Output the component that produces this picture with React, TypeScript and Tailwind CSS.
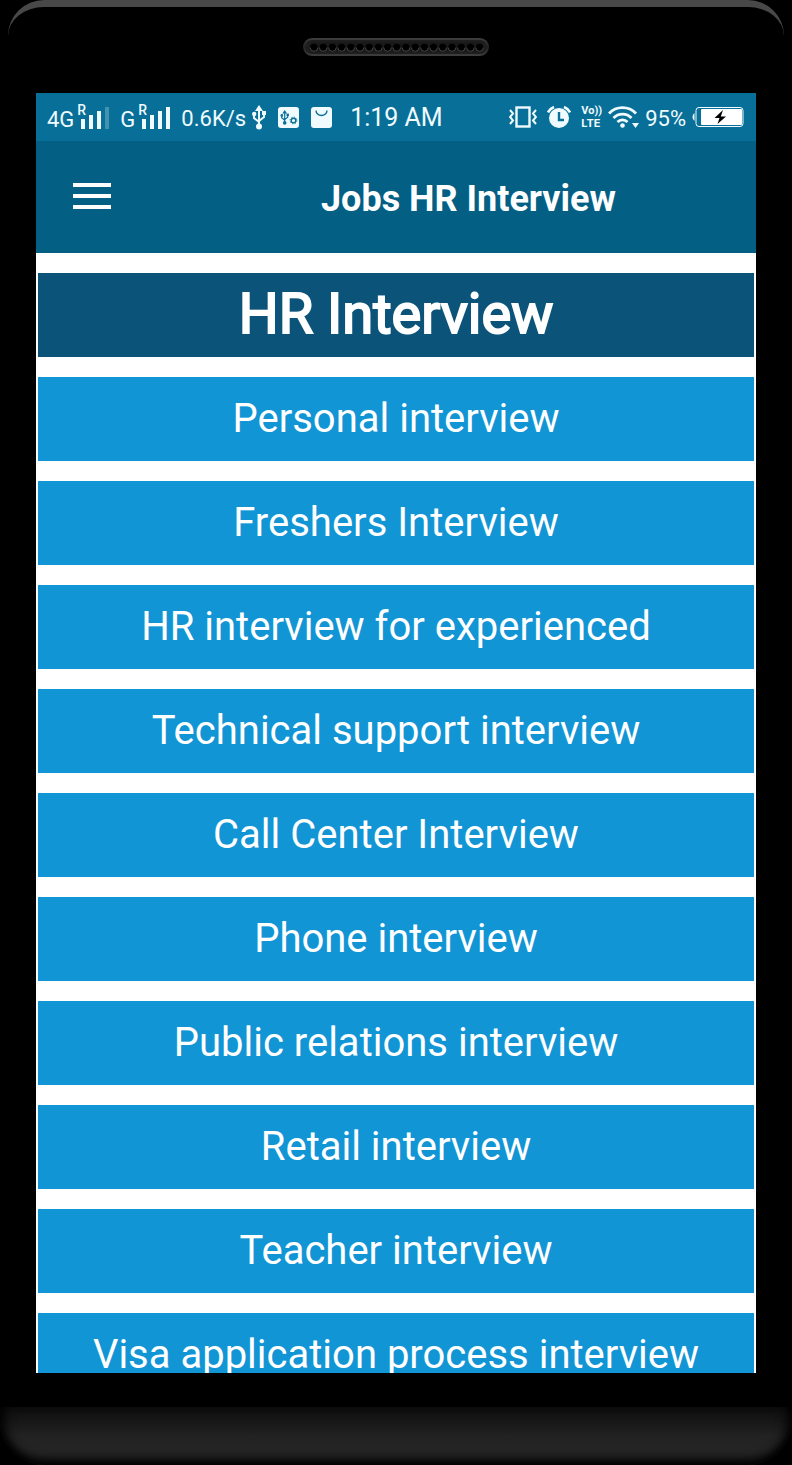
import type { ReactNode } from 'react'

const interviews = [
  'Personal interview',
  'Freshers Interview',
  'HR interview for experienced',
  'Technical support interview',
  'Call Center Interview',
  'Phone interview',
  'Public relations interview',
  'Retail interview',
  'Teacher interview',
  'Visa application process interview',
]

const speakerHoles = Array.from({ length: 19 }, (_, i) => 11 + i * 9.2)

function Speaker() {
  return (
    <svg width="186" height="18" viewBox="0 0 186 18" aria-hidden="true">
      <defs>
        <linearGradient id="speaker-rim" x1="0" y1="0" x2="0" y2="1">
          <stop offset="0" stopColor="#3c3c3c" />
          <stop offset="0.5" stopColor="#222" />
          <stop offset="1" stopColor="#3c3c3c" />
        </linearGradient>
      </defs>
      <rect x="1" y="1" width="184" height="16" rx="8" fill="#1e1e1e" stroke="url(#speaker-rim)" strokeWidth="2" />
      <rect x="6" y="4" width="174" height="10" rx="5" fill="#191919" />
      {speakerHoles.map((x) => (
        <g key={x}>
          <circle cx={x} cy="9.5" r="3.8" fill="#000" />
          <path d={`M${x - 3.8} 9.5a3.8 3.8 0 0 0 7.6 0`} fill="none" stroke="#444" />
        </g>
      ))}
    </svg>
  )
}

function Signal({ label, level }: { label: string; level: number }) {
  return (
    <span className="flex items-center gap-[3px]">
      <span className="pt-[6px] text-[22px] leading-6">{label}</span>
      <span className="relative">
        <svg width="33" height="26" viewBox="0 0 33 26" fill="currentColor" aria-hidden="true">
          <rect x="4" y="15" width="4" height="10" />
          <rect x="12" y="11" width="4" height="14" />
          <rect x="20" y="7" width="4" height="18" />
          <rect x="28" y="3" width="4" height="22" opacity={level > 3 ? 1 : 0.25} />
        </svg>
        <span className="absolute -top-1 left-0 text-sm font-medium">R</span>
      </span>
    </span>
  )
}

function UsbShape() {
  return (
    <>
      <path d="M7 3v17M2 9v4l5 4M12 8v4l-5 4" fill="none" stroke="currentColor" strokeWidth="2" />
      <path d="M7 0l4 6H3z" fill="currentColor" />
      <circle cx="7" cy="21.5" r="3" fill="currentColor" />
      <circle cx="2.2" cy="9" r="2.2" fill="currentColor" />
      <rect x="10" y="6" width="4" height="4" fill="currentColor" />
    </>
  )
}

function Icon({ width, height, children }: { width: number; height: number; children: ReactNode }) {
  return (
    <svg width={width} height={height} viewBox={`0 0 ${width} ${height}`} className="shrink-0" aria-hidden="true">
      {children}
    </svg>
  )
}

function StatusBar() {
  return (
    <div className="flex h-12 shrink-0 items-center justify-between bg-[#086f98] pl-[11px] pr-3 text-[#f0fbff]">
      <div className="flex items-center gap-3">
        <div className="flex items-center gap-[10px]">
          <Signal label="4G" level={3} />
          <Signal label="G" level={4} />
          <div className="flex items-center gap-[6px]">
            <span className="pt-1 text-[22px] leading-6">0.6K/s</span>
            <Icon width={14} height={25}>
              <UsbShape />
            </Icon>
          </div>
        </div>
        <Icon width={21} height={21}>
          <rect width="21" height="21" rx="3" fill="currentColor" />
          <g transform="translate(2.500 3) scale(.6)" className="text-[#086f98]">
            <UsbShape />
          </g>
          <circle cx="15.5" cy="13.5" r="2.3" fill="none" stroke="#086f98" strokeWidth="1.4" />
          <circle cx="15.5" cy="13.5" r="3.4" fill="none" stroke="#086f98" strokeWidth="1" strokeDasharray="1.3 1.37" />
        </Icon>
        <Icon width={21} height={21}>
          <path d="M3 0h15a3 3 0 0 1 3 3v15a3 3 0 0 1-3 3H3a3 3 0 0 1-3-3V3a3 3 0 0 1 3-3z" fill="currentColor" />
          <path d="M5 3.500a5.500 5 0 0 0 11 0" fill="none" stroke="#086f98" strokeWidth="1.4" />
        </Icon>
        <span className="pl-[6px] pt-[2px] text-[25px]">1:19 AM</span>
      </div>

      <div className="flex items-center gap-[6px]">
        <div className="flex items-center gap-[10px]">
          <Icon width={28} height={22}>
            <rect x="7.5" y="1.500" width="13" height="19" fill="none" stroke="currentColor" strokeWidth="2.4" />
            <path
              d="M1 4l3 3.500L1 11l3 3.500L1 18M27 4l-3 3.500 3 3.500-3 3.500 3 3.500"
              fill="none"
              stroke="currentColor"
              strokeWidth="2"
            />
          </Icon>
          <Icon width={24} height={24}>
            <circle cx="12" cy="13" r="10" fill="currentColor" />
            <path d="M1 7.500A11 11 0 0 1 7 2M23 7.500A11 11 0 0 0 17 2" fill="none" stroke="currentColor" strokeWidth="2.6" />
            <path d="M12 7v8h5" fill="none" stroke="#086f98" strokeWidth="2.4" />
          </Icon>
          <span className="flex flex-col text-[11px] font-bold leading-[13px]">
            <span>Vo))</span>
            <span className="font-['Inter',sans-serif]">LTE</span>
          </span>
        </div>
        <Icon width={31} height={24}>
          <g fill="none" stroke="currentColor" strokeWidth="2.8">
            <path d="M1 8.500a18.500 18.500 0 0 1 27 0" />
            <path d="M5.500 13a12.500 12.500 0 0 1 18 0" />
            <path d="M9.500 17a7 7 0 0 1 10 0" />
          </g>
          <circle cx="14.5" cy="20.5" r="2.3" fill="currentColor" />
          <path d="M24 18h7l-3.500 5z" fill="currentColor" />
        </Icon>
        <span className="pt-[2px] text-[22px]">95%</span>
        <Icon width={52} height={22}>
          <path d="M2.500 7A5 5 0 0 0 2.500 15z" fill="currentColor" />
          <rect x="4" y="1.500" width="47" height="19" rx="3" fill="none" stroke="currentColor" />
          <rect x="9" y="3" width="41" height="16" rx="1" fill="#fff" />
          <path d="M31 4l-8.500 8h5l-2 6L34 10.500h-5.200z" fill="#000" />
        </Icon>
      </div>
    </div>
  )
}

function Toolbar() {
  return (
    <header className="flex h-28 shrink-0 items-center bg-[#045f85] pl-[37px] text-white">
      <button type="button" aria-label="Menu" className="flex w-[38px] flex-col gap-[7px] pb-[2px]">
        <span className="h-1 w-full bg-white" />
        <span className="h-1 w-full bg-white" />
        <span className="h-1 w-full bg-white" />
      </button>
      <h1 className="flex-1 pl-[70px] pt-1 text-center text-4xl font-bold">Jobs HR Interview</h1>
    </header>
  )
}

export default function App() {
  return (
    <div className="flex h-screen flex-col bg-black font-['Roboto',sans-serif]">
      <div className="flex h-[93px] shrink-0 justify-center px-2">
        <div className="flex h-full w-full justify-center rounded-t-[36px] border-t-[7px] border-[#484848] pt-[31px]">
          <Speaker />
        </div>
      </div>

      <div className="flex min-h-0 flex-1 flex-col px-9">
        <StatusBar />
        <Toolbar />
        <main className="min-h-0 flex-1 overflow-y-auto bg-white px-[2px] py-5 [scrollbar-width:none]">
          <h2 className="mb-5 flex h-[84px] items-center justify-center bg-[#0b5379] pb-[2px] text-[56px] font-normal text-white [-webkit-text-stroke:2px_white]">
            HR Interview
          </h2>
          <ul className="flex flex-col gap-5">
            {interviews.map((name) => (
              <li key={name}>
                <button type="button" className="h-[84px] w-full bg-[#1295d5] text-[40px] text-white">
                  {name}
                </button>
              </li>
            ))}
          </ul>
        </main>
      </div>

      <div className="h-[92px] shrink-0 pt-[34px]">
        <div className="h-full rounded-b-[44px] bg-linear-to-b from-[#0d0d0d] via-[#222] to-[#272727] shadow-[inset_0_-12px_10px_-6px_#000,inset_12px_0_12px_-8px_#000,inset_-12px_0_12px_-8px_#000]" />
      </div>
    </div>
  )
}
